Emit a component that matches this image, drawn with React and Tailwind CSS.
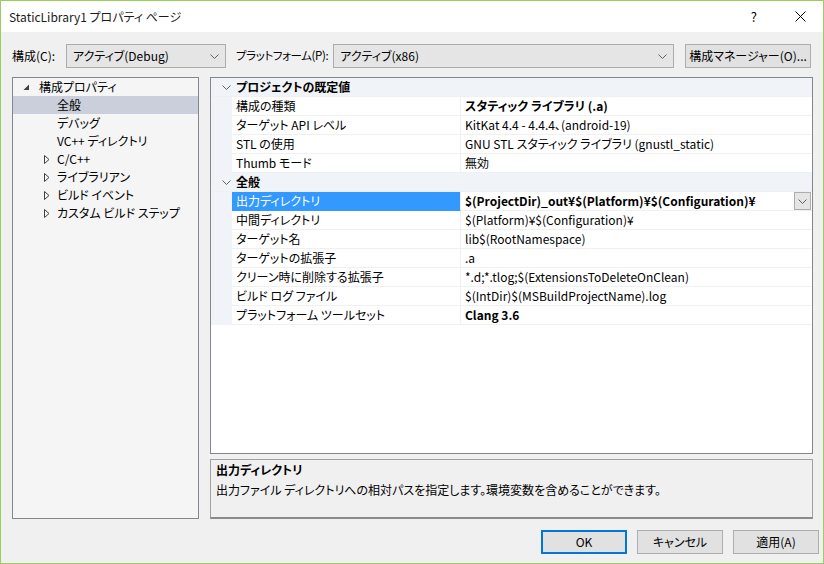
import React from "react";

const font = { fontFamily: "'Noto Sans CJK JP', 'Noto Sans', sans-serif", fontFeatureSettings: "'palt'" };

function Chevron({ className = "" }) {
  return (
    <svg width="9" height="5" viewBox="0 0 9 5" className={className}>
      <polyline points="0.5,0.5 4.5,4.5 8.5,0.5" fill="none" stroke="#606060" strokeWidth="1" />
    </svg>
  );
}

function Dropdown({ text, width }) {
  return (
    <div className={`h-[24px] ${width} bg-[#e5e5e5] border border-[#acacac] flex items-center justify-between pl-[6px] pr-[6px]`}>
      <span className="text-[12px] leading-none text-black">{text}</span>
      <Chevron />
    </div>
  );
}

function Btn({ children, primary }) {
  return (
    <div
      className={`h-[24px] w-[86px] flex items-center justify-center bg-[#e1e1e1] text-[12px] leading-none text-black ${
        primary ? "border-2 border-[#0078d7]" : "border border-[#adadad]"
      }`}
    >
      {children}
    </div>
  );
}

const ExpandedTri = () => (
  <svg width="7" height="7" viewBox="0 0 7 7">
    <polygon points="6,0.5 6,6 0.5,6" fill="#404040" />
  </svg>
);
const CollapsedTri = () => (
  <svg width="6" height="9" viewBox="0 0 6 9">
    <polygon points="0.5,0.5 5,4.5 0.5,8.5" fill="none" stroke="#404040" strokeWidth="1" />
  </svg>
);

function TreeRow({ text, level, tri, selected }) {
  return (
    <div className={`h-[18px] flex items-center ${selected ? "bg-[#cbcfdb]" : ""}`}>
      {level === 0 ? (
        <>
          <div className="w-[17px] flex justify-end">
            <ExpandedTri />
          </div>
          <span className="ml-[9px] text-[12px] leading-none">{text}</span>
        </>
      ) : (
        <>
          <div className="w-[37px] flex justify-end">{tri ? <CollapsedTri /> : null}</div>
          <span className="ml-[7px] text-[12px] leading-none">{text}</span>
        </>
      )}
    </div>
  );
}

function CatRow({ text }) {
  return (
    <div className="h-[19px] bg-[#f0f3f8] flex items-center border-b border-[#f0f0f0]">
      <div className="w-[20px] flex justify-end">
        <Chevron />
      </div>
      <span className="ml-[5px] text-[12px] leading-none font-bold">{text}</span>
    </div>
  );
}

function PropRow({ name, value, bold, selected }) {
  return (
    <div className="h-[19px] flex">
      <div className="w-[21px] bg-[#f0f3f8]" />
      <div
        className={`w-[229px] flex items-center pl-[4px] border-b border-r border-[#f0f0f0] ${
          selected ? "bg-[#3399ff] text-white border-b-[#3399ff]" : ""
        }`}
      >
        <span className="text-[12px] leading-none whitespace-nowrap">{name}</span>
      </div>
      <div className="flex-1 flex items-center justify-between pl-[4px] border-b border-[#f0f0f0]">
        <span className={`text-[12px] leading-none whitespace-nowrap ${bold ? "font-bold" : ""}`}>{value}</span>
        {selected ? (
          <div className="w-[17px] h-[18px] bg-[#e5e5e5] border border-[#acacac] flex items-center justify-center mr-[1px]">
            <Chevron />
          </div>
        ) : null}
      </div>
    </div>
  );
}

export default function App() {
  return (
    <div style={font} className="w-[824px] h-[564px] border border-[#98cf5d] flex flex-col text-black bg-[#f0f0f0] overflow-hidden">
      {/* title bar */}
      <div className="h-[31px] bg-white flex items-center shrink-0">
        <span className="ml-[8px] text-[12px] leading-none text-[#1a1a1a]">StaticLibrary1 プロパティ ページ</span>
        <div className="flex-1" />
        <span className="text-[13px] leading-none mr-[38px]">?</span>
        <svg width="11" height="11" viewBox="0 0 11 11" className="mr-[17px]">
          <line x1="0.5" y1="0.5" x2="10.5" y2="10.5" stroke="#000" strokeWidth="1" />
          <line x1="10.5" y1="0.5" x2="0.5" y2="10.5" stroke="#000" strokeWidth="1" />
        </svg>
      </div>

      {/* body */}
      <div className="flex-1 flex flex-col pl-[11px]">
        {/* config row */}
        <div className="mt-[12px] flex items-center h-[24px] w-[799px]">
          <span className="w-[54px] shrink-0 text-[12px] leading-none">構成(C):</span>
          <Dropdown text="アクティブ(Debug)" width="w-[160px] shrink-0" />
          <span className="ml-[10px] mr-[5px] shrink-0 text-[11.5px] tracking-[-0.4px] leading-none whitespace-nowrap">プラットフォーム(P):</span>
          <Dropdown text="アクティブ(x86)" width="flex-1 min-w-0" />
          <div className="ml-[11px] h-[24px] w-[126px] shrink-0 bg-[#e1e1e1] border border-[#adadad] flex items-center justify-center text-[12px] leading-none">
            構成マネージャー(O)...
          </div>
        </div>

        {/* panels */}
        <div className="mt-[9px] flex gap-[11px]">
          <div className="w-[187px] h-[442px] border border-[#828790] bg-[#f5f5f5]">
            <TreeRow text="構成プロパティ" level={0} />
            <TreeRow text="全般" level={1} selected />
            <TreeRow text="デバッグ" level={1} />
            <TreeRow text="VC++ ディレクトリ" level={1} />
            <TreeRow text="C/C++" level={1} tri />
            <TreeRow text="ライブラリアン" level={1} tri />
            <TreeRow text="ビルド イベント" level={1} tri />
            <TreeRow text="カスタム ビルド ステップ" level={1} tri />
          </div>

          <div className="w-[603px] flex flex-col gap-[5px]">
            <div className="h-[377px] border border-[#828790] bg-white flex flex-col">
              <CatRow text="プロジェクトの既定値" />
              <PropRow name="構成の種類" value="スタティック ライブラリ (.a)" bold />
              <PropRow name="ターゲット API レベル" value="KitKat 4.4 - 4.4.4、(android-19)" />
              <PropRow name="STL の使用" value="GNU STL スタティック ライブラリ (gnustl_static)" />
              <PropRow name="Thumb モード" value="無効" />
              <CatRow text="全般" />
              <PropRow name="出力ディレクトリ" value="$(ProjectDir)_out¥$(Platform)¥$(Configuration)¥" bold selected />
              <PropRow name="中間ディレクトリ" value="$(Platform)¥$(Configuration)¥" />
              <PropRow name="ターゲット名" value="lib$(RootNamespace)" />
              <PropRow name="ターゲットの拡張子" value=".a" />
              <PropRow name="クリーン時に削除する拡張子" value="*.d;*.tlog;$(ExtensionsToDeleteOnClean)" />
              <PropRow name="ビルド ログ ファイル" value="$(IntDir)$(MSBuildProjectName).log" />
              <PropRow name="プラットフォーム ツールセット" value="Clang 3.6" bold />
            </div>
            <div className="h-[60px] border border-[#a0a0a0] border-b-2 border-b-[#8a8a8a] bg-[#f0f0f0] pl-[5px] pt-[4px] flex flex-col gap-[8px]">
              <span className="text-[12px] leading-[12px] font-bold">出力ディレクトリ</span>
              <span className="text-[12px] leading-[12px]">出力ファイル ディレクトリへの相対パスを指定します。環境変数を含めることができます。</span>
            </div>
          </div>
        </div>

        {/* buttons */}
        <div className="mt-[11px] flex gap-[10px] pl-[529px]">
          <Btn primary>OK</Btn>
          <Btn>キャンセル</Btn>
          <Btn>適用(A)</Btn>
        </div>
      </div>
    </div>
  );
}
